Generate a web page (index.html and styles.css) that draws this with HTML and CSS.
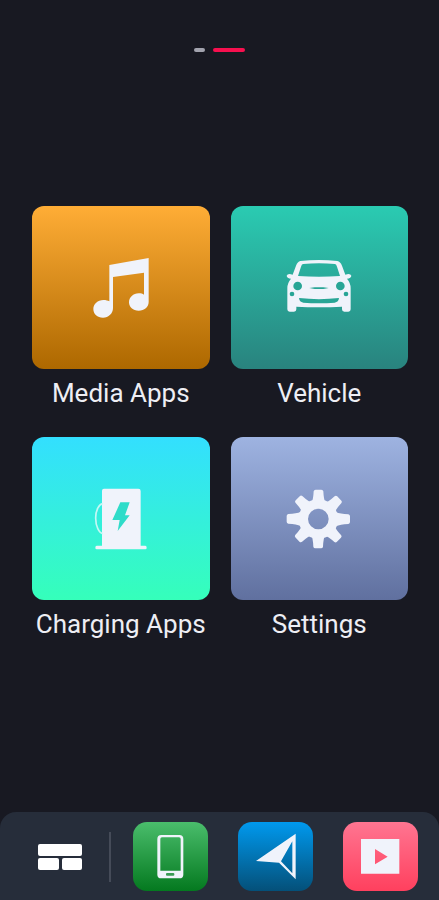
FILE: index.html
```html
<!DOCTYPE html>
<html lang="en">
<head>
<meta charset="utf-8">
<meta name="viewport" content="width=device-width, initial-scale=1">
<title>Apps</title>
<link rel="stylesheet" href="styles.css">
</head>
<body>
<div class="pager"><span class="page"></span><span class="page current"></span></div>
<main class="apps">
  <button class="app">
    <span class="card media"><svg class="glyph" viewBox="-12 7 270 270" aria-hidden="true">
      <path d="M88 73L206 52V184C206 199 193 210 176 210C159 210 147 199 147 185C147 170 160 158 176 158C183 158 188 159 192 162V96L99 109V202C99 218 86 231 69 231C52 231 40 220 40 205C40 190 53 178 70 178C78 178 84 180 88 182Z"/>
    </svg></span>
    <span class="label">Media Apps</span>
  </button>
  <button class="app">
    <span class="card vehicle"><svg class="glyph" viewBox="-1 -7 270 270" aria-hidden="true">
      <path fill-rule="evenodd" d="M78 47Q134 41 189 47Q198 49 203 61L213 88Q228 83 231 91Q230 99 218 100Q229 113 229 128V192Q229 199 222 199H210Q203 199 203 192V184Q134 187 66 184V192Q66 199 59 199H46Q39 199 39 192V128Q39 113 50 100Q38 99 37 91Q40 83 55 88L65 61Q70 49 78 47ZM86 56Q82 57 80 64L71 92Q134 96 197 92L188 64Q186 57 182 56Q134 51 86 56Z"/>
      <g class="vehicle-cut"><circle cx="70" cy="122" r="13"/><circle cx="198" cy="122" r="13"/><circle cx="53" cy="146" r="7"/><circle cx="215" cy="146" r="7"/><path d="M74 158Q134 165 194 158Q193 170 181 172Q134 176 87 172Q75 170 74 158Z"/><path d="M105 128L121 126H147L163 128L147 131H121Z"/></g>
    </svg></span>
    <span class="label">Vehicle</span>
  </button>
  <button class="app">
    <span class="card charging"><svg class="glyph" viewBox="-12 -5 270 270" aria-hidden="true">
      <path d="M66 45Q66 39 72 39H175Q182 39 182 46V210H196Q200 210 200 216Q200 221 196 221H50Q46 221 46 216Q46 210 50 210H66Z"/>
      <path class="cable" d="M68 84C57 86 47 103 47 127C47 152 57 172 68 174"/>
      <path class="bolt" d="M121 80H149L135 119H149L113 166L119 133H97Z"/>
    </svg></span>
    <span class="label">Charging Apps</span>
  </button>
  <button class="app">
    <span class="card settings"><svg class="glyph" viewBox="-2 -5 270 270" aria-hidden="true">
      <defs><path id="tooth" d="M110 84Q116 72 117 47Q118 42 123 42H140Q145 42 146 47Q147 72 153 84Z"/></defs>
      <circle class="ring" cx="131" cy="130" r="45"/>
      <use href="#tooth"/><use href="#tooth" transform="rotate(45 131 130)"/><use href="#tooth" transform="translate(7 0) rotate(90 131 130)"/><use href="#tooth" transform="rotate(135 131 130)"/><use href="#tooth" transform="rotate(180 131 130)"/><use href="#tooth" transform="rotate(225 131 130)"/><use href="#tooth" transform="translate(-7 0) rotate(270 131 130)"/><use href="#tooth" transform="rotate(315 131 130)"/>
    </svg></span>
    <span class="label">Settings</span>
  </button>
</main>
<nav class="dock" aria-label="Dock">
  <div class="start">
    <button class="home" aria-label="Home"><span class="block wide"></span><span class="block"></span><span class="block"></span></button>
    <span class="divider"></span>
  </div>
  <div class="shortcuts">
    <button class="tile phone" aria-label="Phone"><svg viewBox="399 66 225 207" aria-hidden="true">
      <path fill-rule="evenodd" d="M484 105H538Q550 105 550 117V224Q550 235 538 235H484Q472 235 472 224V117Q472 105 484 105ZM486 112Q481 112 481 117V212H542V117Q542 112 537 112Z"/>
      <rect class="phone-key" x="498" y="219" width="25" height="8" rx="3"/>
    </svg></button>
    <button class="tile navigate" aria-label="Navigation"><svg viewBox="54 66 225 207" aria-hidden="true">
      <path fill-rule="evenodd" d="M227 101V238L177 188L108 183ZM217 124L183 184L217 220Z"/>
    </svg></button>
    <button class="tile video" aria-label="Video"><svg viewBox="369 66 225 207" aria-hidden="true">
      <path fill-rule="evenodd" d="M423 117H538V221H423ZM465 147V193L503 170Z"/>
    </svg></button>
  </div>
</nav>
</body>
</html>
```
FILE: styles.css
```css
* { box-sizing: border-box; }

body {
  margin: 0;
  min-height: 100vh;
  display: flex;
  flex-direction: column;
  background: #181922;
  color: #eeeef4;
  font-family: Roboto, "Liberation Sans", sans-serif;
}

button {
  margin: 0;
  padding: 0;
  border: 0;
  background: none;
  color: inherit;
  font: inherit;
  cursor: pointer;
}

svg { display: block; fill: #f0f3fb; }

.pager {
  display: flex;
  justify-content: center;
  gap: 8px;
  padding-top: 48px;
}

.page {
  width: 11px;
  height: 4px;
  border-radius: 2px;
  background: #a2a3ae;
}

.page.current { width: 32px; background: #f7104f; }

.apps {
  display: grid;
  grid-template-columns: 1fr 1fr;
  gap: 20px 21px;
  padding: 154px 31px 0 32px;
}

.app {
  display: flex;
  flex-direction: column;
  min-width: 0;
}

.card {
  display: flex;
  align-items: center;
  justify-content: center;
  width: 100%;
  height: 163px;
  border-radius: 12px;
}

.glyph { width: 90px; height: 90px; }

.media { background: linear-gradient(#ffad36, #ad6800); }
.vehicle { background: linear-gradient(#2acbb2, #29837e); }
.charging { background: linear-gradient(#33dfff, #35ffba); }
.settings { background: linear-gradient(#9eb3e1, #60709f); }

.vehicle-cut { fill: #28a596; }
.cable { fill: none; stroke: #c4f8f5; stroke-width: 5; }
.bolt { fill: #2fdcc9; }
.ring { fill: none; stroke: #f0f3fb; stroke-width: 28; }

.label {
  width: 100%;
  font-size: 26px;
  line-height: 48px;
  text-align: center;
  white-space: nowrap;
}

.dock {
  display: flex;
  align-items: center;
  justify-content: space-between;
  margin-top: auto;
  padding: 10px 21px 9px 38px;
  border-radius: 16px 16px 0 0;
  background: #262d3a;
}

.start { display: flex; align-items: center; gap: 27px; }

.home {
  display: grid;
  grid-template-columns: 1fr 1fr;
  gap: 2px 3px;
  width: 44px;
}

.block {
  height: 12px;
  border-radius: 2px;
  background: #fff;
}

.wide { grid-column: span 2; }

.divider { width: 2px; height: 50px; background: #454b58; }

.shortcuts { display: flex; gap: 30px; }

.tile {
  width: 75px;
  height: 69px;
  border-radius: 14px;
  overflow: hidden;
}

.tile svg { width: 100%; height: 100%; }

.phone { background: linear-gradient(#4abd6c, #04791f); }
.navigate { background: linear-gradient(#0099ee, #045079); }
.video { background: linear-gradient(#ff7591, #ff405e); }
.phone-key { fill: #3a9a55; }
```
